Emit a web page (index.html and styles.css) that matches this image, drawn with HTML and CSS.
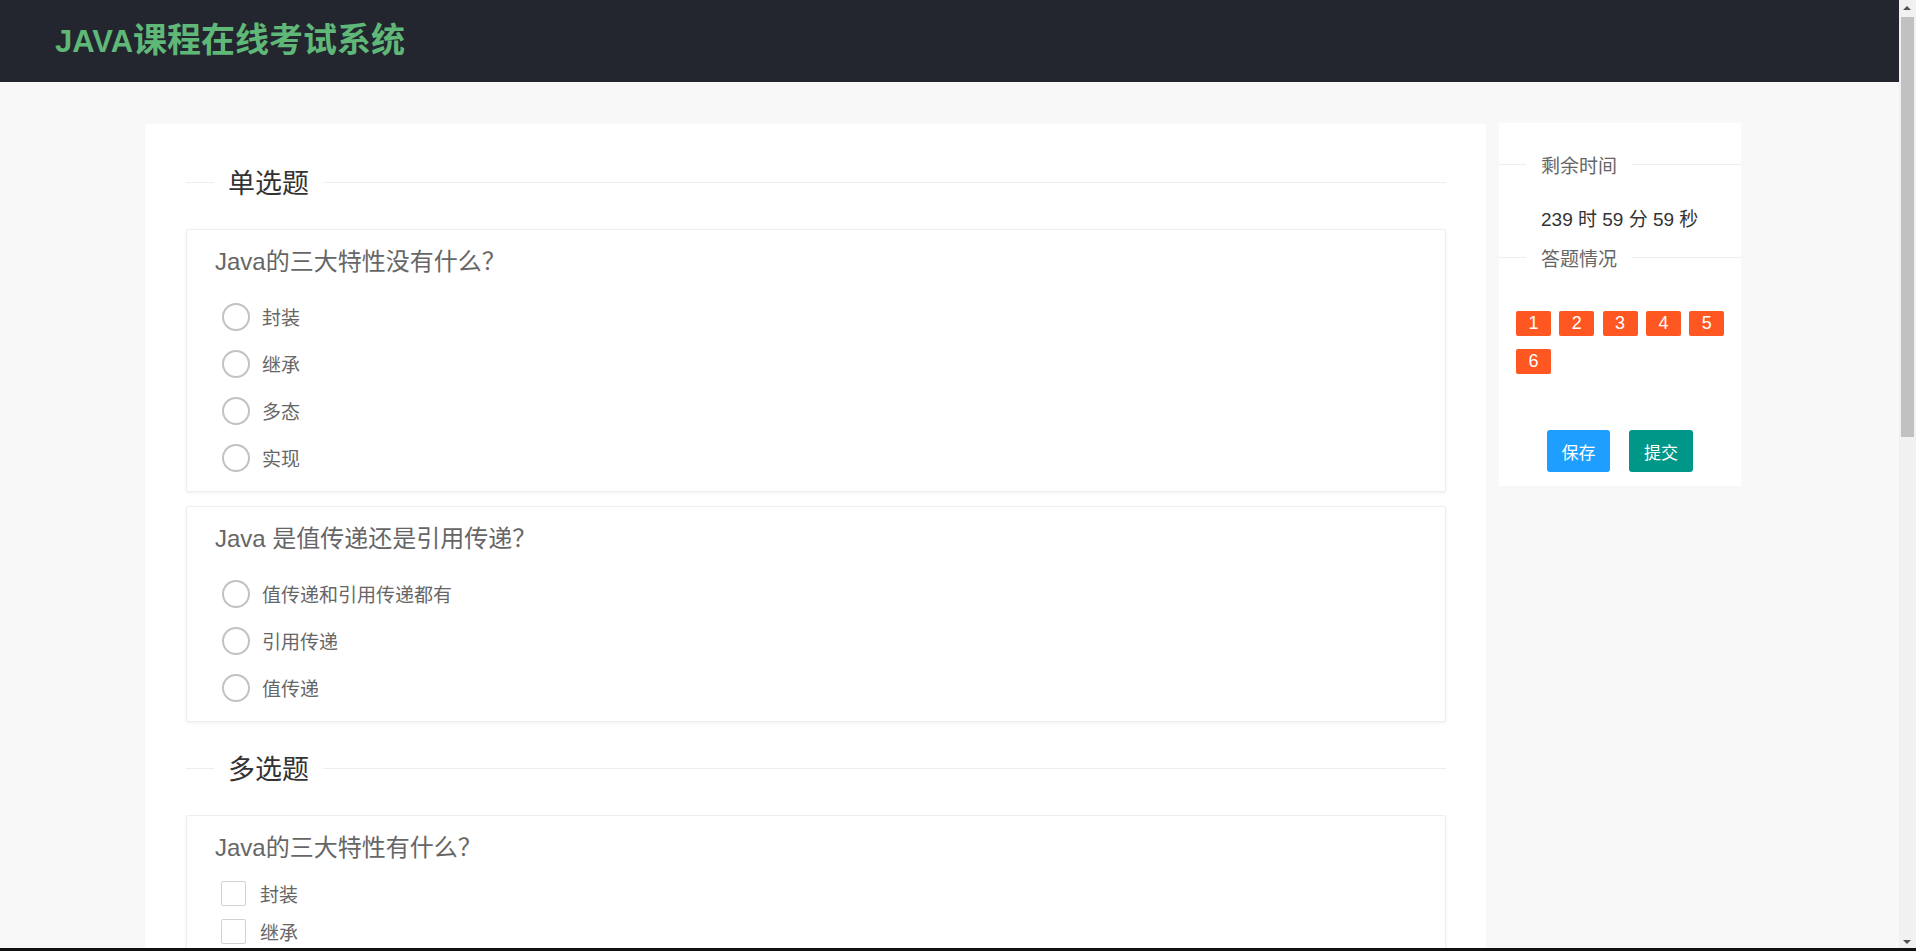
FILE: index.html
```html
<!DOCTYPE html>
<html lang="zh-CN">
<head>
<meta charset="utf-8">
<title>JAVA课程在线考试系统</title>
<link rel="stylesheet" href="styles.css">
</head>
<body>
<header class="topbar">
  <div class="brand"><span class="brand-latin">JAVA</span>课程在线考试系统</div>
</header>

<div class="page">
  <main class="paper">
    <div class="sec-title"><span>单选题</span></div>

    <div class="qcard">
      <div class="qhead">Java的三大特性没有什么？</div>
      <div class="opts">
        <label class="opt"><i class="radio"></i><span>封装</span></label>
        <label class="opt"><i class="radio"></i><span>继承</span></label>
        <label class="opt"><i class="radio"></i><span>多态</span></label>
        <label class="opt"><i class="radio"></i><span>实现</span></label>
      </div>
    </div>

    <div class="qcard">
      <div class="qhead">Java 是值传递还是引用传递？</div>
      <div class="opts">
        <label class="opt"><i class="radio"></i><span>值传递和引用传递都有</span></label>
        <label class="opt"><i class="radio"></i><span>引用传递</span></label>
        <label class="opt"><i class="radio"></i><span>值传递</span></label>
      </div>
    </div>

    <div class="sec-title sec-next"><span>多选题</span></div>

    <div class="qcard">
      <div class="qhead">Java的三大特性有什么？</div>
      <div class="opts checks">
        <label class="chk"><i class="box"></i><span>封装</span></label>
        <label class="chk"><i class="box"></i><span>继承</span></label>
        <label class="chk"><i class="box"></i><span>多态</span></label>
        <label class="chk"><i class="box"></i><span>实现</span></label>
      </div>
    </div>

    <div class="qcard">
      <div class="qhead">以下哪些是Java的基本数据类型？</div>
      <div class="opts checks">
        <label class="chk"><i class="box"></i><span>int</span></label>
        <label class="chk"><i class="box"></i><span>String</span></label>
        <label class="chk"><i class="box"></i><span>boolean</span></label>
        <label class="chk"><i class="box"></i><span>double</span></label>
      </div>
    </div>

    <div class="sec-title sec-next"><span>判断题</span></div>

    <div class="qcard">
      <div class="qhead">Java是一种面向对象的编程语言。</div>
      <div class="opts">
        <label class="opt"><i class="radio"></i><span>正确</span></label>
        <label class="opt"><i class="radio"></i><span>错误</span></label>
      </div>
    </div>

    <div class="qcard">
      <div class="qhead">Java中的String类可以被继承。</div>
      <div class="opts">
        <label class="opt"><i class="radio"></i><span>正确</span></label>
        <label class="opt"><i class="radio"></i><span>错误</span></label>
      </div>
    </div>
  </main>

  <aside class="side">
    <div class="side-title"><span>剩余时间</span></div>
    <div class="timer">239 时 59 分 59 秒</div>
    <div class="side-title side-title2"><span>答题情况</span></div>
    <div class="nums">
      <a class="num">1</a>
      <a class="num">2</a>
      <a class="num">3</a>
      <a class="num">4</a>
      <a class="num">5</a>
      <a class="num">6</a>
    </div>
    <div class="actions">
      <button class="btn btn-save">保存</button>
      <button class="btn btn-submit">提交</button>
    </div>
  </aside>
</div>

<div class="scrollbar">
  <div class="sb-arrow sb-up"></div>
  <div class="sb-track"><div class="sb-thumb"></div></div>
  <div class="sb-arrow sb-down"></div>
</div>
<div class="screen-edge"></div>
</body>
</html>
```

FILE: styles.css
```css
* { box-sizing: border-box; }

html, body {
  margin: 0;
  padding: 0;
}

html {
  scrollbar-width: none;
}

html::-webkit-scrollbar {
  display: none;
}

body {
  background: #f8f8f8;
  font-family: "Liberation Sans", "Noto Sans CJK SC", sans-serif;
  color: #666;
}

.topbar {
  height: 82px;
  background: #23262e;
  padding-left: 55px;
  display: flex;
  align-items: center;
}

.brand {
  font-size: 34px;
  font-weight: bold;
  color: #5fb878;
  line-height: 40px;
}

.brand-latin {
  font-size: 31px;
}

.page {
  display: flex;
  align-items: flex-start;
  padding-top: 41px;
}

.paper {
  margin-left: 145px;
  margin-top: 1px;
  width: 1341px;
  background: #fff;
  padding: 38px 40px 60px 41px;
}

.sec-title {
  display: flex;
  align-items: center;
  height: 40px;
  margin-bottom: 27px;
}

.sec-title::before {
  content: "";
  width: 28px;
  border-top: 1px solid #eee;
}

.sec-title::after {
  content: "";
  flex: 1;
  border-top: 1px solid #eee;
}

.sec-title span {
  padding: 0 14px;
  margin-top: 4px;
  font-size: 27px;
  line-height: 40px;
  color: #333;
}

.sec-next {
  margin-top: 26px;
}

.qcard {
  background: #fff;
  border: 1px solid #eee;
  border-radius: 2px;
  box-shadow: 0 1px 3px rgba(0, 0, 0, 0.06);
}

.qcard + .qcard {
  margin-top: 14px;
}

.qhead {
  height: 63px;
  line-height: 63px;
  padding-left: 28px;
  font-size: 24px;
  color: #666;
}

.opts {
  padding: 0 0 10px 35px;
}

.opt {
  display: flex;
  align-items: center;
  height: 47px;
  font-size: 19px;
  color: #666;
}

.radio {
  width: 28px;
  height: 28px;
  border: 2px solid #c2c2c2;
  border-radius: 50%;
  margin-right: 12px;
  flex: none;
}

.checks {
  margin-top: -5px;
  padding-left: 34px;
}

.chk {
  display: flex;
  align-items: center;
  height: 38px;
  font-size: 19px;
  color: #666;
}

.box {
  width: 25px;
  height: 25px;
  border: 1px solid #d2d2d2;
  border-radius: 2px;
  margin-right: 14px;
  flex: none;
}

.side {
  width: 242px;
  margin-left: 13px;
  background: #fff;
  padding: 27px 0 14px;
}

.side-title {
  display: flex;
  align-items: center;
  height: 28px;
}

.side-title::before {
  content: "";
  width: 27px;
  border-top: 1px solid #eee;
}

.side-title::after {
  content: "";
  flex: 1;
  border-top: 1px solid #eee;
}

.side-title span {
  padding: 0 15px;
  margin-top: 5px;
  font-size: 19px;
  line-height: 28px;
  color: #666;
}

.side-title2 {
  margin-top: 9px;
}

.timer {
  margin-top: 26px;
  padding-top: 2px;
  padding-left: 42px;
  font-size: 19px;
  line-height: 28px;
  color: #333;
}

.nums {
  margin-top: 40px;
  padding-left: 17px;
  display: flex;
  flex-wrap: wrap;
  row-gap: 13px;
  column-gap: 8.3px;
}

.num {
  width: 35px;
  height: 25px;
  line-height: 25px;
  text-align: center;
  background: #ff5722;
  color: #fff;
  font-size: 18px;
  border-radius: 2px;
}

.actions {
  margin-top: 56px;
  display: flex;
  justify-content: center;
  gap: 19px;
}

.btn {
  height: 42px;
  border: none;
  border-radius: 3px;
  color: #fff;
  font-family: "Liberation Sans", "Noto Sans CJK SC", sans-serif;
  font-size: 17px;
  padding: 0;
}

.btn-save {
  width: 63px;
  background: #1e9fff;
}

.btn-submit {
  width: 64px;
  background: #009688;
}

/* window scrollbar as captured in the screenshot */
.scrollbar {
  position: fixed;
  top: 0;
  right: 0;
  bottom: 0;
  width: 17px;
  background: #f1f1f1;
  display: flex;
  flex-direction: column;
}

.sb-arrow {
  height: 17px;
  flex: none;
  position: relative;
}

.sb-arrow::after {
  content: "";
  position: absolute;
  left: 4px;
  border-left: 4.5px solid transparent;
  border-right: 4.5px solid transparent;
}

.sb-up::after {
  top: 6px;
  border-bottom: 4.5px solid #505050;
}

.sb-down::after {
  top: 6px;
  border-top: 4.5px solid #505050;
}

.sb-track {
  flex: 1;
  padding: 0 2px;
}

.sb-thumb {
  height: 420px;
  background: #c1c1c1;
}

.screen-edge {
  position: fixed;
  left: 0;
  right: 0;
  bottom: 0;
  height: 3px;
  background: #111;
}
```
